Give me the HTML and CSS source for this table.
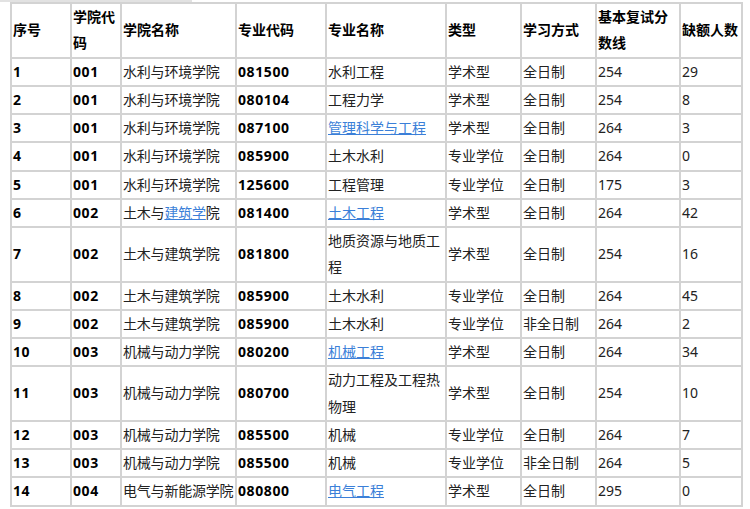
FILE: index.html
```html
<!DOCTYPE html>
<html lang="zh-CN">
<head>
<meta charset="utf-8">
<title>复试分数线</title>
<link rel="stylesheet" href="styles.css">
</head>
<body>
<div class="topline"></div>
<table class="score">
<colgroup>
<col class="c1"><col class="c2"><col class="c3"><col class="c4"><col class="c5"><col class="c6"><col class="c7"><col class="c8"><col class="c9">
</colgroup>
<thead>
<tr><th>序号</th><th>学院代码</th><th>学院名称</th><th>专业代码</th><th>专业名称</th><th>类型</th><th>学习方式</th><th>基本复试分数线</th><th>缺额人数</th></tr>
</thead>
<tbody>
<tr><td class="b">1</td><td class="b">001</td><td class="nw">水利与环境学院</td><td class="b">081500</td><td>水利工程</td><td>学术型</td><td>全日制</td><td>254</td><td>29</td></tr>
<tr><td class="b">2</td><td class="b">001</td><td class="nw">水利与环境学院</td><td class="b">080104</td><td>工程力学</td><td>学术型</td><td>全日制</td><td>254</td><td>8</td></tr>
<tr><td class="b">3</td><td class="b">001</td><td class="nw">水利与环境学院</td><td class="b">087100</td><td><a href="#">管理科学与工程</a></td><td>学术型</td><td>全日制</td><td>264</td><td>3</td></tr>
<tr><td class="b">4</td><td class="b">001</td><td class="nw">水利与环境学院</td><td class="b">085900</td><td>土木水利</td><td>专业学位</td><td>全日制</td><td>264</td><td>0</td></tr>
<tr><td class="b">5</td><td class="b">001</td><td class="nw">水利与环境学院</td><td class="b">125600</td><td>工程管理</td><td>专业学位</td><td>全日制</td><td>175</td><td>3</td></tr>
<tr><td class="b">6</td><td class="b">002</td><td class="nw">土木与<a href="#">建筑学</a>院</td><td class="b">081400</td><td><a href="#">土木工程</a></td><td>学术型</td><td>全日制</td><td>264</td><td>42</td></tr>
<tr><td class="b">7</td><td class="b">002</td><td class="nw">土木与建筑学院</td><td class="b">081800</td><td>地质资源与地质工程</td><td>学术型</td><td>全日制</td><td>254</td><td>16</td></tr>
<tr><td class="b">8</td><td class="b">002</td><td class="nw">土木与建筑学院</td><td class="b">085900</td><td>土木水利</td><td>专业学位</td><td>全日制</td><td>264</td><td>45</td></tr>
<tr><td class="b">9</td><td class="b">002</td><td class="nw">土木与建筑学院</td><td class="b">085900</td><td>土木水利</td><td>专业学位</td><td>非全日制</td><td>264</td><td>2</td></tr>
<tr><td class="b">10</td><td class="b">003</td><td class="nw">机械与动力学院</td><td class="b">080200</td><td><a href="#">机械工程</a></td><td>学术型</td><td>全日制</td><td>264</td><td>34</td></tr>
<tr><td class="b">11</td><td class="b">003</td><td class="nw">机械与动力学院</td><td class="b">080700</td><td>动力工程及工程热物理</td><td>学术型</td><td>全日制</td><td>254</td><td>10</td></tr>
<tr><td class="b">12</td><td class="b">003</td><td class="nw">机械与动力学院</td><td class="b">085500</td><td>机械</td><td>专业学位</td><td>全日制</td><td>264</td><td>7</td></tr>
<tr><td class="b">13</td><td class="b">003</td><td class="nw">机械与动力学院</td><td class="b">085500</td><td>机械</td><td>专业学位</td><td>非全日制</td><td>264</td><td>5</td></tr>
<tr><td class="b">14</td><td class="b">004</td><td class="nw">电气与新能源学院</td><td class="b">080800</td><td><a href="#">电气工程</a></td><td>学术型</td><td>全日制</td><td>295</td><td>0</td></tr>
</tbody>
</table>
</body>
</html>
```

FILE: styles.css
```css
html, body {
  margin: 0;
  padding: 0;
  background: #fff;
}
body {
  font-family: "Noto Sans", "Noto Sans CJK SC", sans-serif;
  font-size: 14px;
  color: #222;
}
.topline {
  width: 192px;
  height: 2px;
  background: #e2e2e2;
}
.score {
  margin: 0 0 0 10px;
  border-collapse: collapse;
  table-layout: fixed;
  width: 733px;
}
.score th,
.score td {
  border: 2px solid #d3d3d3;
  padding: 0 1px;
  line-height: 26.25px;
  text-align: left;
  vertical-align: middle;
  word-break: break-all;
}
.score th,
.score td.b {
  font-weight: bold;
  color: #000;
}
.score td.b {
  letter-spacing: 0.6px;
}
.score td.nw {
  white-space: nowrap;
  overflow: visible;
  letter-spacing: -0.2px;
}
.score a {
  color: #3b7fd8;
  text-decoration: underline;
}
.c1 { width: 60px; }
.c2 { width: 50px; }
.c3 { width: 115px; }
.c4 { width: 90px; }
.c5 { width: 120px; }
.c6 { width: 75px; }
.c7 { width: 75px; }
.c8 { width: 84px; }
.c9 { width: 62px; }
```
